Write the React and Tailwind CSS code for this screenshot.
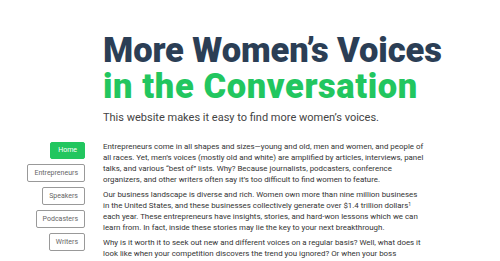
const navItems = ['Home', 'Entrepreneurs', 'Speakers', 'Podcasters', 'Writers'];

const NavButton = ({ label, active }) => (
    <button
        className={
            active
                ? 'h-[17px] px-[7px] rounded-[2px] bg-[#22c65f] text-white text-[7px] leading-none border border-[#22c65f]'
                : 'h-[18px] px-[6px] rounded-[2px] bg-white text-[#666] text-[7px] leading-none border border-[#999]'
        }
    >
        {label}
    </button>
);

const App = () => {
    return (
        <div className="w-[500px] h-[261px] overflow-hidden bg-white font-['Roboto',sans-serif]">
            <header className="pl-[103px] pt-[32px]">
                <h1 className="text-[34.5px] leading-[36px] font-black">
                    <span className="block text-[#2b3e55] tracking-[-0.1px]">More Women’s Voices</span>
                    <span className="block text-[#22c65f] tracking-[0.6px]">in the Conversation</span>
                </h1>
                <p className="mt-[7px] text-[11px] leading-[14px] text-[#444]">
                    This website makes it easy to find more women’s voices.
                </p>
            </header>

            <div className="flex gap-[18px] mt-[16px]">
                <nav className="w-[85px] shrink-0 flex flex-col items-end gap-[5px] pt-[1px]">
                    {navItems.map((item) => (
                        <NavButton key={item} label={item} active={item === 'Home'} />
                    ))}
                </nav>

                <main className="w-[340px] text-[7.9px] leading-[11px] text-[#333] flex flex-col gap-[4px]">
                    <p>
                        Entrepreneurs come in all shapes and sizes—young and old, men and women, and people of<br />
                        all races. Yet, men’s voices (mostly old and white) are amplified by articles, interviews, panel<br />
                        talks, and various “best of” lists. Why? Because journalists, podcasters, conference<br />
                        organizers, and other writers often say it’s too difficult to find women to feature.
                    </p>
                    <p>
                        Our business landscape is diverse and rich. Women own more than nine million busineses<br />
                        in the United States, and these businesses collectively generate over $1.4 trillion dollars
                        <sup className="text-[5px]">1</sup><br />
                        each year. These entrepreneurs have insights, stories, and hard-won lessons which we can<br />
                        learn from. In fact, inside these stories may lie the key to your next breakthrough.
                    </p>
                    <p>
                        Why is it worth it to seek out new and different voices on a regular basis? Well, what does it<br />
                        look like when your competition discovers the trend you ignored? Or when your boss<br />
                        realizes your team is missing out on fresh perspectives and new ideas?
                    </p>
                </main>
            </div>
        </div>
    );
};

export default App;
